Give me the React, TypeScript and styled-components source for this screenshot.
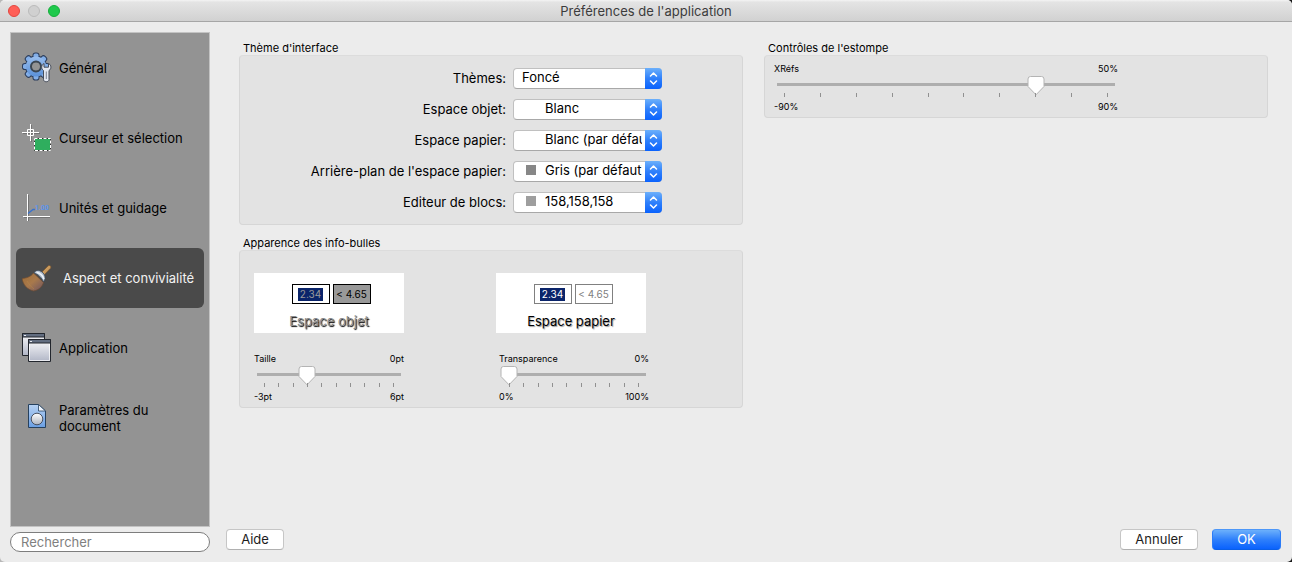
import React, { useState } from "react";
import styled, { createGlobalStyle, css } from "styled-components";

const GlobalStyle = createGlobalStyle`
  *, *::before, *::after { box-sizing: border-box; }
  body {
    margin: 0;
    background: linear-gradient(90deg, #b8b8b8, #1a1a1a);
    color: #000;
    font: 13px/16px Inter, "Liberation Sans", sans-serif;
  }
  button, input, select { font: inherit; color: inherit; }
`;

const Window = styled.div`
  display: flex;
  flex-direction: column;
  min-height: 100vh;
  background: #ececec;
  border-radius: 5px;
  overflow: hidden;
`;

const TitleBar = styled.header`
  display: grid;
  grid-template-columns: 1fr auto 1fr;
  align-items: center;
  height: 22px;
  padding: 0 8px;
  background: linear-gradient(#f4f4f4, #e4e4e4 10%, #d1d1d1);
  border-bottom: 1px solid #a6a6a6;
`;

const TrafficLights = styled.div`
  display: flex;
  gap: 8px;
`;

const Light = styled.button<{ $fill: string; $edge: string }>`
  width: 12px;
  height: 12px;
  padding: 0;
  border: 1px solid ${(p) => p.$edge};
  border-radius: 50%;
  background: ${(p) => p.$fill};
`;

const Title = styled.h1`
  margin: 0;
  font-size: 13px;
  line-height: 16px;
  font-weight: 400;
  color: #3c3c3c;
`;

const Body = styled.div`
  display: flex;
  flex: 1;
  gap: 16px;
  padding: 10px 11px 10px 10px;
`;

const Sidebar = styled.aside`
  display: flex;
  flex-direction: column;
  flex: none;
  gap: 5px;
  width: 200px;
`;

const NavList = styled.nav`
  display: flex;
  flex: 1;
  flex-direction: column;
  gap: 10px;
  padding: 5px;
  background: #939393;
  border: 1px solid #c3c3c3;
`;

const NavItem = styled.button<{ $active: boolean }>`
  display: flex;
  align-items: center;
  gap: ${(p) => (p.$active ? 11 : 7)}px;
  height: 60px;
  padding: 0 6px;
  border: 0;
  border-radius: 6px;
  background: ${(p) => (p.$active ? "#4a4a4a" : "transparent")};
  color: ${(p) => (p.$active ? "#f2f2f2" : "#000")};
  text-align: left;

  svg { flex: none; }
`;

const SearchField = styled.input`
  width: 100%;
  height: 20px;
  padding: 0 10px;
  border: 1px solid #7d7d7d;
  border-radius: 10px;
  background: #fff;

  &::placeholder { color: #7f7f7f; opacity: 1; }
`;

const Main = styled.main`
  display: flex;
  flex: 1;
  flex-direction: column;
  min-width: 0;
`;

const Panels = styled.div`
  display: grid;
  flex: 1;
  grid-template-columns: 1fr 1fr;
  gap: 21px;
  align-items: start;
  padding: 9px 13px 0 13px;
`;

const Column = styled.div`
  display: flex;
  flex-direction: column;
  gap: 11px;
`;

const GroupTitle = styled.h2`
  margin: 0;
  padding-left: 4px;
  font-size: 11px;
  line-height: 14px;
  font-weight: 400;
`;

const groupBox = css`
  background: #e3e3e3;
  border: 1px solid #d6d6d6;
  border-top-color: #dcdcdc;
  border-radius: 4px;
`;

const ThemeBox = styled.div`
  ${groupBox}
  display: flex;
  flex-direction: column;
  gap: 10px;
  padding: 12px 80px 11px 8px;
`;

const ThemeRow = styled.div`
  display: grid;
  grid-template-columns: 1fr 149px;
  gap: 7px;
  align-items: center;
  text-align: right;

  label { padding-bottom: 1px; }
`;

const PopUp = styled.div`
  display: flex;
  position: relative;
  height: 21px;
  border: 1px solid #c0c0c0;
  border-bottom-color: #a8a8a8;
  border-radius: 4px;
  background: #fff;
`;

const PopUpSelect = styled.select<{ $indent: boolean }>`
  appearance: none;
  flex: 1;
  min-width: 0;
  margin-right: 19px;
  padding: 0 0 3px ${(p) => (p.$indent ? 31 : 8)}px;
  border: 0;
  background: transparent;
  line-height: 16px;
  text-overflow: clip;
`;

const Swatch = styled.span<{ $color: string }>`
  position: absolute;
  top: 3px;
  left: 12px;
  width: 10px;
  height: 10px;
  background: ${(p) => p.$color};
`;

const Stepper = styled.span`
  position: absolute;
  top: -1px;
  right: -1px;
  display: flex;
  align-items: center;
  justify-content: center;
  width: 17px;
  height: 21px;
  border-radius: 0 4px 4px 0;
  background: linear-gradient(#6cb0fb, #2f80fb 50%, #0a62fd);
  pointer-events: none;
`;

const TooltipBox = styled.div`
  ${groupBox}
  display: grid;
  grid-template-columns: 1fr 1fr;
  padding: 22px 4px 4px 14px;
`;

const FadeBox = styled.div`
  ${groupBox}
  padding: 7px 149px 4px 9px;
`;

const TooltipSample = styled.div`
  display: flex;
  flex-direction: column;
  gap: 20px;
`;

const Preview = styled.div`
  display: flex;
  flex-direction: column;
  align-items: center;
  gap: 9px;
  width: 150px;
  height: 60px;
  padding-top: 11px;
  background: #fff;
`;

const Bubbles = styled.div`
  display: flex;
  gap: 3px;
  padding-left: 5px;
`;

const Bubble = styled.span<{ $line: string; $fill: string; $ink: string }>`
  display: flex;
  align-items: center;
  justify-content: center;
  width: 38px;
  height: 20px;
  padding-right: 1px;
  border: 1px solid ${(p) => p.$line};
  background: ${(p) => p.$fill};
  color: ${(p) => p.$ink};
  font-size: 10px;
  line-height: 13px;
  white-space: nowrap;
`;

const Marked = styled.span`
  width: 25px;
  background: #0a246a;
  text-align: center;
`;

const PreviewName = styled.span<{ $ink: string; $shade: string }>`
  color: ${(p) => p.$ink};
  text-shadow: 1px 1px 1px ${(p) => p.$shade};
`;

const SliderBlock = styled.div<{ $width: string; $inset: number }>`
  width: ${(p) => p.$width};
  margin-left: ${(p) => p.$inset}px;
  font-size: 9px;
  line-height: 12px;
`;

const Ends = styled.div`
  display: flex;
  justify-content: space-between;
`;

const thumbShape = `url("data:image/svg+xml,%3Csvg xmlns='http://www.w3.org/2000/svg' width='18' height='20'%3E%3Cpath d='M3.5 .5h11a2.5 2.5 0 0 1 2.500 2.500v7.500L9 18.800 1 10.500V3A2.500 2.500 0 0 1 3.500 .5z' fill='%23fff' stroke='%23b4b4b4'/%3E%3C/svg%3E")`;

const Range = styled.input`
  appearance: none;
  display: block;
  width: calc(100% - 2px);
  height: 20px;
  margin: 1px 1px 0;
  background: linear-gradient(#aeaeae, #aeaeae) center 7px / calc(100% - 4px) 3px no-repeat;

  &::-webkit-slider-thumb {
    appearance: none;
    width: 18px;
    height: 20px;
    background: ${thumbShape} no-repeat;
  }
`;

const Ticks = styled.div`
  display: flex;
  justify-content: space-between;
  height: 4px;
  margin: -3px 0 4px;
  padding: 0 10px;
`;

const Tick = styled.span`
  width: 1px;
  background: #909090;
`;

const Footer = styled.footer`
  display: flex;
  gap: 14px;
  padding-bottom: 2px;
`;

const PushButton = styled.button<{ $primary?: boolean }>`
  min-width: 58px;
  height: 21px;
  padding: 0 14px 1px;
  border: 1px solid #c6c6c6;
  border-bottom-color: #b0b0b0;
  border-radius: 4px;
  background: #fff;
  line-height: 16px;
  color: #1c1c1c;

  &:first-child { margin-right: auto; }

  ${(p) =>
    p.$primary &&
    css`
      width: 69px;
      border-color: #4d97f8 #2b7cf8 #0a5fe8;
      background: linear-gradient(#6cb0fb, #2f80fb 50%, #0a62fd);
      color: #fff;
    `}
`;

const teeth = [0, 45, 90, 135, 180, 225, 270, 315];

const GearShape = () => (
  <>
    <circle cx="14" cy="14.500" r="8.500" fill="none" />
    {teeth.map((angle) => (
      <rect key={angle} x="11.500" y="1.500" width="5" height="6" rx="1.800" transform={`rotate(${angle} 14 14.500)`} />
    ))}
  </>
);

const GearIcon = () => (
  <svg width="30" height="32" viewBox="0 0 30 32" aria-hidden="true">
    <defs>
      <linearGradient id="gear" gradientUnits="userSpaceOnUse" x1="0" y1="1" x2="0" y2="28">
        <stop offset="0" stopColor="#a4c6f2" />
        <stop offset="1" stopColor="#4f88d4" />
      </linearGradient>
    </defs>
    <g stroke="#2b3d5c" strokeWidth="2" fill="#2b3d5c">
      {teeth.map((angle) => (
        <rect key={angle} x="11.500" y="1.500" width="5" height="6" rx="1.800" transform={`rotate(${angle} 14 14.500)`} />
      ))}
      <circle cx="14" cy="14.500" r="7.700" fill="none" strokeWidth="6.500" />
    </g>
    <g fill="#82aee8">
      <GearShape />
    </g>
    <circle cx="14" cy="14.500" r="7.700" fill="none" stroke="url(#gear)" strokeWidth="4.800" />
    <circle cx="14" cy="14.500" r="5" fill="none" stroke="#3b4652" strokeWidth="2" />
    <path
      d="M22 11.500c-1.600.9-2.300 2.300-2.300 3.700 0 1.500.8 2.600 1.800 3.300V27.500c0 3 5.500 3 5.500 0v-9c1.200-.7 1.900-1.800 1.900-3.300s-.7-2.800-2.400-3.700v3.700H22z"
      fill="#e3e7f0"
      stroke="#474d59"
    />
    <path d="M24.300 19.500v7.500" stroke="#7b8494" />
  </svg>
);

const CursorIcon = () => (
  <svg width="30" height="30" viewBox="0 0 30 30" aria-hidden="true">
    <path d="M9.500 2v17M1 10.500h17" stroke="#555" opacity=".5" />
    <path d="M8.500 1v17M0 9.500h17M5.500 6.500h6v6h-6z" fill="none" stroke="#fff" />
    <path d="M12.500 15.500h16v12h-16z" fill="#2fae5e" stroke="#333" />
    <path d="M12.500 15.500h16v12h-16z" fill="none" stroke="#fff" strokeDasharray="3 1.500" />
  </svg>
);

const UnitsIcon = () => (
  <svg width="30" height="30" viewBox="0 0 30 30" aria-hidden="true">
    <path d="M6.500 2v26M2 24.500h26" stroke="#555" opacity=".5" />
    <path d="M5.500 1v27M1 23.500h27" stroke="#fff" />
    <path d="M6 20.500l5-4h2" fill="none" stroke="#3a72cc" strokeWidth="1.500" />
    <text x="13" y="17" fontSize="7" fontWeight="700" fontFamily="Roboto, sans-serif" fill="#5a94ee">1.00</text>
  </svg>
);

const BrushIcon = () => (
  <svg width="30" height="30" viewBox="0 -1 30 30" aria-hidden="true">
    <defs>
      <linearGradient id="bristle" x1="0" y1="0" x2="1" y2="1">
        <stop offset="0" stopColor="#a06e36" />
        <stop offset=".5" stopColor="#a8794c" />
        <stop offset="1" stopColor="#6c5362" />
      </linearGradient>
    </defs>
    <path d="M19.500 8.500l6.500-6.600c1.800-1.300 3.700.5 2.500 2.300l-6.200 6.500z" fill="#c99a5d" stroke="#75522e" strokeWidth=".7" />
    <path d="M11.500 9C8.500 13 4.500 14 0 14.500c1 6 5 11 11.500 12.500 6-1 9-5 10-8.500z" fill="url(#bristle)" stroke="#6d4a31" strokeWidth=".7" />
    <path d="M5 17c2 3 3 5 7 8" fill="none" stroke="#b98446" strokeWidth=".6" />
    <path d="M12 9c1-3 5-3.500 8-1 3 2.500 4.300 6 1.500 10C20 14 16 10 12 9z" fill="#b5c2d1" stroke="#3d4b5c" strokeWidth=".8" />
    <path d="M14.500 8.300c4 1 6.500 3.500 7.500 7" fill="none" stroke="#edf3f9" strokeWidth="1.500" />
  </svg>
);

const WindowsIcon = () => (
  <svg width="30" height="30" viewBox="0 0 30 30" aria-hidden="true">
    <defs>
      <linearGradient id="pane" x1="0" y1="0" x2="0" y2="1">
        <stop offset="0" stopColor="#fafafc" />
        <stop offset="1" stopColor="#b1b6c6" />
      </linearGradient>
    </defs>
    <g stroke="#22262d">
      <path d="M.5 .5h22v22H.5z" fill="url(#pane)" />
      <path d="M.5 .5h22v3.500H.5z" fill="#626d80" />
      <path d="M6.500 6.500h22v22h-22z" fill="url(#pane)" />
      <path d="M6.500 6.500h22v3.500h-22z" fill="#626d80" />
    </g>
    <path d="M2 2.500h2M8 8.500h2" stroke="#e8ecf2" />
    <path d="M7.500 11v16.500h20V11" fill="none" stroke="#fff" opacity=".7" />
  </svg>
);

const DocumentIcon = () => (
  <svg width="30" height="30" viewBox="0 0 30 30" aria-hidden="true">
    <defs>
      <linearGradient id="sheet" x1="0" y1="0" x2="0" y2="1">
        <stop offset="0" stopColor="#b7d2f3" />
        <stop offset="1" stopColor="#6a9fe4" />
      </linearGradient>
      <linearGradient id="disc" x1="0" y1="0" x2="0" y2="1">
        <stop offset="0" stopColor="#fff" />
        <stop offset="1" stopColor="#adb3bf" />
      </linearGradient>
    </defs>
    <path d="M6.500 1.500h10l7 6.500v16.500h-17z" fill="url(#sheet)" stroke="#26415f" />
    <path d="M16.500 1.500V8h7z" fill="#eef4fc" stroke="#26415f" strokeWidth=".8" />
    <circle cx="15" cy="16" r="5.800" fill="url(#disc)" stroke="#4a5261" />
  </svg>
);

const sections = [
  { name: "Général", Icon: GearIcon },
  { name: "Curseur et sélection", Icon: CursorIcon },
  { name: "Unités et guidage", Icon: UnitsIcon },
  { name: "Aspect et convivialité", Icon: BrushIcon },
  { name: "Application", Icon: WindowsIcon },
  { name: "Paramètres du document", Icon: DocumentIcon },
];

const themeSettings = [
  { id: "theme", label: "Thèmes:", value: "Foncé" },
  { id: "model", label: "Espace objet:", value: "Blanc", swatch: "#fff" },
  { id: "paper", label: "Espace papier:", value: "Blanc (par défaut)", swatch: "#fff" },
  { id: "paper-bg", label: "Arrière-plan de l'espace papier:", value: "Gris (par défaut)", swatch: "#878787" },
  { id: "blocks", label: "Editeur de blocs:", value: "158,158,158", swatch: "#9e9e9e" },
];

type SliderProps = {
  id: string;
  label: string;
  min: number;
  max: number;
  initial: number;
  unit: string;
  width?: string;
  inset?: number;
};

function Slider({ id, label, min, max, initial, unit, width = "150px", inset = 0 }: SliderProps) {
  const [value, setValue] = useState(initial);
  return (
    <SliderBlock $width={width} $inset={inset}>
      <Ends>
        <label htmlFor={id}>{label}</label>
        <output htmlFor={id}>{`${value}${unit}`}</output>
      </Ends>
      <Range id={id} type="range" min={min} max={max} value={value} onChange={(e) => setValue(Number(e.target.value))} />
      <Ticks>
        {Array.from({ length: 10 }, (_, i) => (
          <Tick key={i} />
        ))}
      </Ticks>
      <Ends>
        <span>{`${min}${unit}`}</span>
        <span>{`${max}${unit}`}</span>
      </Ends>
    </SliderBlock>
  );
}

export default function App() {
  const [active, setActive] = useState("Aspect et convivialité");
  return (
    <>
      <GlobalStyle />
      <Window>
        <TitleBar>
          <TrafficLights>
            <Light $fill="#ff5f57" $edge="#e2463f" aria-label="Fermer" />
            <Light $fill="#d0d0d0" $edge="#bababa" aria-label="Réduire" />
            <Light $fill="#1fc94c" $edge="#14ae3a" aria-label="Agrandir" />
          </TrafficLights>
          <Title>Préférences de l'application</Title>
        </TitleBar>
        <Body>
          <Sidebar>
            <NavList>
              {sections.map(({ name, Icon }) => (
                <NavItem key={name} $active={name === active} onClick={() => setActive(name)}>
                  <Icon />
                  <span>{name}</span>
                </NavItem>
              ))}
            </NavList>
            <SearchField type="text" placeholder="Rechercher" aria-label="Rechercher" />
          </Sidebar>
          <Main>
            <Panels>
              <Column>
                <section>
                  <GroupTitle>Thème d'interface</GroupTitle>
                  <ThemeBox>
                    {themeSettings.map(({ id, label, value, swatch }) => (
                      <ThemeRow key={id}>
                        <label htmlFor={id}>{label}</label>
                        <PopUp>
                          {swatch && <Swatch $color={swatch} />}
                          <PopUpSelect id={id} $indent={Boolean(swatch)}>
                            <option>{value}</option>
                          </PopUpSelect>
                          <Stepper>
                            <svg width="9" height="13" viewBox="0 0 9 13" fill="none" stroke="#fff" strokeWidth="1.500" strokeLinecap="round" strokeLinejoin="round" aria-hidden="true">
                              <path d="M1.500 4l3-3 3 3M1.500 9l3 3 3-3" />
                            </svg>
                          </Stepper>
                        </PopUp>
                      </ThemeRow>
                    ))}
                  </ThemeBox>
                </section>
                <section>
                  <GroupTitle>Apparence des info-bulles</GroupTitle>
                  <TooltipBox>
                    <TooltipSample>
                      <Preview>
                        <Bubbles>
                          <Bubble $line="#000" $fill="#fff" $ink="#9a9a9a">
                            <Marked>2.34</Marked>
                          </Bubble>
                          <Bubble $line="#000" $fill="#999" $ink="#000">&lt; 4.65</Bubble>
                        </Bubbles>
                        <PreviewName $ink="#8c8c8c" $shade="#000">Espace objet</PreviewName>
                      </Preview>
                      <Slider id="size" label="Taille" min={-3} max={6} initial={0} unit="pt" />
                    </TooltipSample>
                    <TooltipSample>
                      <Preview>
                        <Bubbles>
                          <Bubble $line="#808080" $fill="#fff" $ink="#fff">
                            <Marked>2.34</Marked>
                          </Bubble>
                          <Bubble $line="#808080" $fill="#fff" $ink="#808080">&lt; 4.65</Bubble>
                        </Bubbles>
                        <PreviewName $ink="#000" $shade="#999">Espace papier</PreviewName>
                      </Preview>
                      <Slider id="transparency" label="Transparence" min={0} max={100} initial={0} unit="%" inset={3} />
                    </TooltipSample>
                  </TooltipBox>
                </section>
              </Column>
              <section>
                <GroupTitle>Contrôles de l'estompe</GroupTitle>
                <FadeBox>
                  <Slider id="xrefs" label="XRéfs" min={-90} max={90} initial={50} unit="%" width="100%" />
                </FadeBox>
              </section>
            </Panels>
            <Footer>
              <PushButton>Aide</PushButton>
              <PushButton>Annuler</PushButton>
              <PushButton $primary>OK</PushButton>
            </Footer>
          </Main>
        </Body>
      </Window>
    </>
  );
}
